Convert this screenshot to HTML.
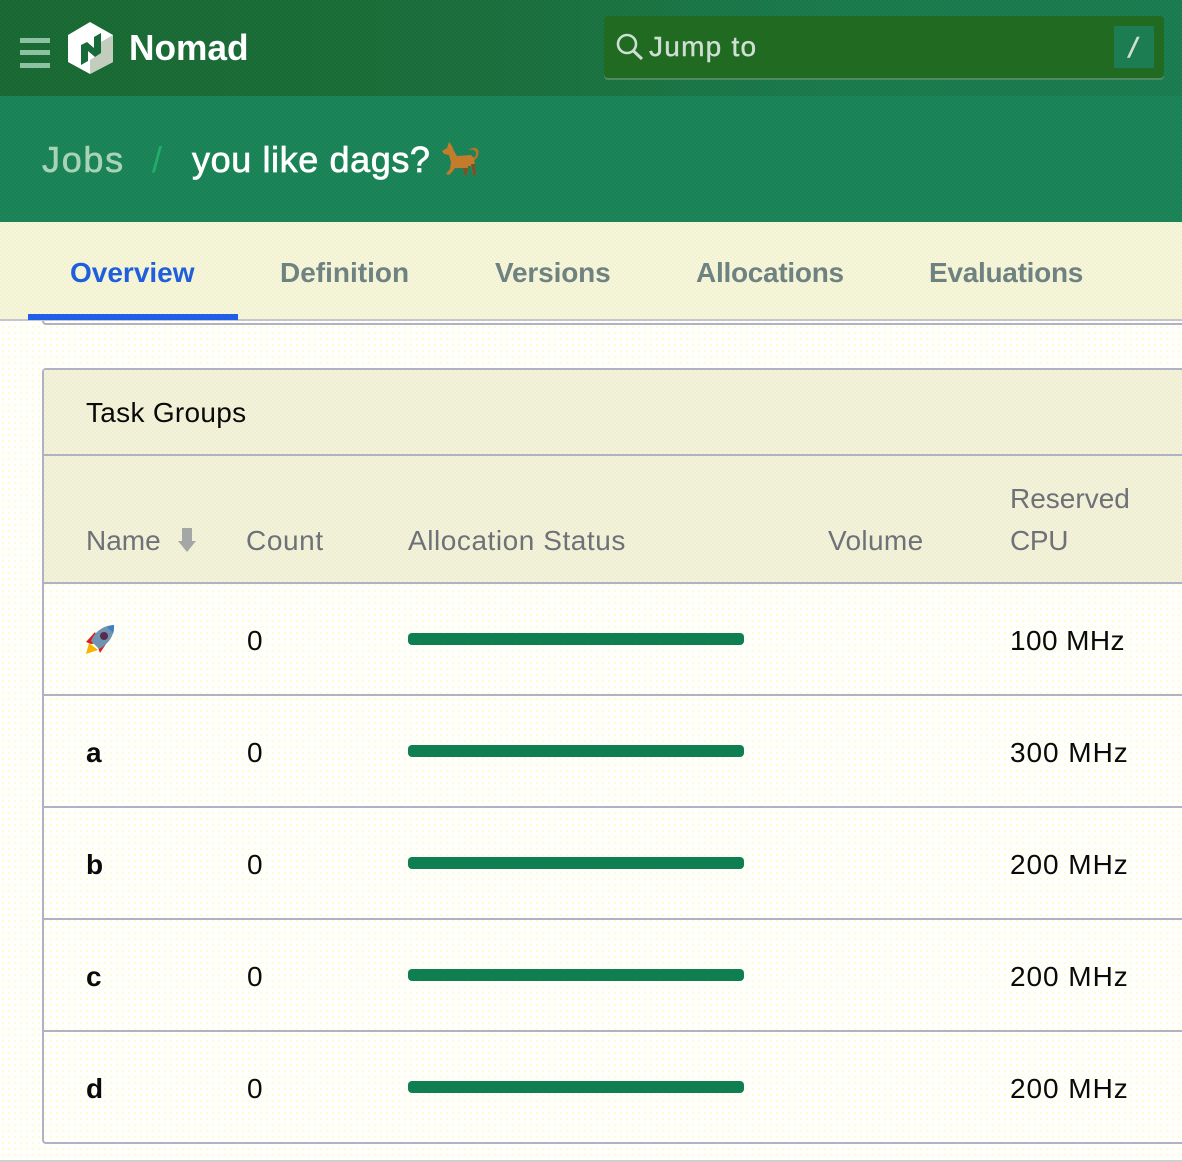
<!DOCTYPE html>
<html><head><meta charset="utf-8"><style>
html,body{margin:0;padding:0;background:#fefefb}
#p{position:relative;width:1182px;height:1162px;overflow:hidden;font-family:"Liberation Sans",sans-serif;background-color:#fefefa;background-image:radial-gradient(circle,#fff7b0 0.6px,transparent 0.9px);background-size:6px 6px}
.a{position:absolute;white-space:nowrap}
.l{position:absolute;height:2px;background:#b0b1c4;left:44px;right:0}
.hd{position:absolute;font-size:28px;line-height:34px;color:#6f7178;letter-spacing:.5px}
.c{position:absolute;font-size:28px;line-height:34px;color:#0a0a0a;letter-spacing:.4px}
.m{letter-spacing:.95px}
.b{position:absolute;font-size:28px;line-height:34px;color:#0a0a0a;font-weight:bold;left:86px}
.bar{position:absolute;left:408px;width:336px;height:12px;border-radius:4px;background:#0f7f52}
.tab{position:absolute;top:256px;font-size:28px;line-height:34px;font-weight:bold;color:#6f8282}
.dith{background-image:repeating-conic-gradient(rgba(255,255,255,.28) 0 25%,transparent 0 50%);background-size:4px 4px}
.dk{background-image:repeating-conic-gradient(rgba(0,40,30,.07) 0 25%,transparent 0 50%);background-size:4px 4px}
</style></head><body><div id="p">
<div class="a" style="left:0;top:0;width:1182px;height:96px;background:linear-gradient(90deg,#1b6c34 0,#1c713c 40%,#1c7d4e 70%,#1c7f52 100%)"></div>
<div class="a dk" style="left:0;top:0;width:1182px;height:96px"></div>
<div class="a" style="left:0;top:96px;width:1182px;height:126px;background:#1c8659"></div>
<div class="a dk" style="left:0;top:96px;width:1182px;height:126px"></div>
<div class="a" style="left:20px;top:38px;width:30px;height:5px;background:#8cc2a2"></div>
<div class="a" style="left:20px;top:50px;width:30px;height:5px;background:#8cc2a2"></div>
<div class="a" style="left:20px;top:63px;width:30px;height:5px;background:#8cc2a2"></div>
<svg class="a" style="left:60px;top:15px" width="60" height="65" viewBox="60 15 60 65">
<path d="M90 22L113 35V62L90 74L68 62V35Z" fill="#fff"/>
<path d="M113 35L101 42V53L90 60V74L113 62Z" fill="#c3cdbd"/>
<path d="M81 45L87 42L94 48V37L101 33V53L95 57L88 51V61L81 65Z" fill="#176a3a"/>
</svg>
<div class="a" style="left:129px;top:27px;font-size:36px;line-height:42px;font-weight:bold;color:#fff;transform-origin:0 50%;transform:scaleX(.98)">Nomad</div>
<div class="a" style="left:604px;top:16px;width:560px;height:62px;background:#206a22;border-radius:4px;box-shadow:0 2px 0 #4f8a63"></div>
<div class="a" style="left:1114px;top:26px;width:40px;height:42px;background:#1c7d52"></div>
<svg class="a" style="left:612px;top:30px" width="34" height="34" viewBox="0 0 34 34"><circle cx="15" cy="14" r="9" fill="none" stroke="#cfe0d2" stroke-width="2.6"/><path d="M21.500 21L30 29" stroke="#cfe0d2" stroke-width="3"/></svg>
<div class="a" style="left:649px;top:30px;font-size:28px;line-height:34px;color:#cfe0d2;letter-spacing:1.25px;-webkit-text-stroke:.4px #cfe0d2">Jump to</div>
<div class="a" style="left:1129px;top:31px;font-size:28px;line-height:34px;font-style:italic;color:#cfe0d2;-webkit-text-stroke:.6px #cfe0d2">/</div>
<div class="a" style="left:42px;top:139px;font-size:36px;line-height:42px;color:#a8d3b6;letter-spacing:1.700px;-webkit-text-stroke:.6px #a8d3b6">Jobs</div>
<div class="a" style="left:152px;top:139px;font-size:36px;line-height:42px;color:#22ad68">/</div>
<div class="a" style="left:192px;top:139px;font-size:36px;line-height:42px;color:#fff;letter-spacing:.6px;-webkit-text-stroke:.7px #fff">you like dags?</div>
<svg class="a" style="left:440px;top:142px" width="40" height="36" viewBox="0 0 40 36">
<path d="M33 16C37 14 37 9 33 8C31 7 29 8 28 9C32 4 39 5 38.500 11C38 16 35 19 31 19Z" fill="#b8722a"/>
<path d="M2 9L7 6L9 0L12 4L14 9L17 14L31 13L34 16L36 33H33L31 24L28 24L27 33H24L23 26L15 26L12 30L9 33L6 32L10 27L11 20L9 13L4 12Z" fill="#c47c2c"/>
<path d="M23 26H28L27 33H24ZM31 22L33 33H36L35 22Z" fill="#7a5228"/>
</svg>
<div class="a dith" style="left:0;top:222px;width:1182px;height:97px;background-color:#f3f2d0"></div>
<div class="a" style="left:0;top:319px;width:1182px;height:2px;background:#c4c5cf"></div>
<div class="a" style="left:42px;top:321px;width:1160px;height:2px;border:2px solid #b0b1c4;border-top:0;border-radius:0 0 4px 4px"></div>
<div class="tab" style="left:70px;color:#1f5fdc">Overview</div>
<div class="tab" style="left:280px">Definition</div>
<div class="tab" style="left:495px;letter-spacing:-.15px">Versions</div>
<div class="tab" style="left:696px;letter-spacing:-.28px">Allocations</div>
<div class="tab" style="left:929px;letter-spacing:-.28px">Evaluations</div>
<div class="a" style="left:28px;top:314px;width:210px;height:6px;background:#1f5fe8"></div>
<div class="a" style="left:42px;top:368px;width:1160px;height:776px;border:2px solid #b0b1c4;border-radius:4px;box-sizing:border-box"></div>
<div class="a dith" style="left:44px;top:370px;width:1138px;height:213px;background-color:#efeed0"></div>
<div class="l" style="top:454px"></div>
<div class="l" style="top:582px"></div>
<div class="l" style="top:694px"></div>
<div class="l" style="top:806px"></div>
<div class="l" style="top:918px"></div>
<div class="l" style="top:1030px"></div>
<div class="a" style="left:0;top:1160px;width:1182px;height:2px;background:#cfcfd0"></div>
<div class="c" style="left:86px;top:396px;letter-spacing:.3px">Task Groups</div>
<div class="hd" style="left:86px;top:524px;letter-spacing:0">Name</div>
<svg class="a" style="left:176px;top:527px" width="22" height="26" viewBox="0 0 22 26"><path d="M6 1H16V14H20L11 25L2 14H6Z" fill="#a5a6a6"/></svg>
<div class="hd" style="left:246px;top:524px;letter-spacing:.6px">Count</div>
<div class="hd" style="left:408px;top:524px;letter-spacing:.55px">Allocation Status</div>
<div class="hd" style="left:828px;top:524px;letter-spacing:.35px">Volume</div>
<div class="hd" style="left:1010px;top:482px;letter-spacing:0">Reserved</div>
<div class="hd" style="left:1010px;top:524px;letter-spacing:-.3px">CPU</div>
<svg class="a" style="left:84px;top:624px" width="32" height="32" viewBox="0 0 32 32">
<path d="M2 18L11 8L15 19L7 20Z" fill="#d8201f"/><path d="M16 29L24 17L12 18Z" fill="#d8201f"/>
<path d="M2 30L5 19L14 26Z" fill="#f7b500"/>
<path d="M7 17C11 6 22 1 30 1C31 10 25 20 15 25Z" fill="#6f93b2"/>
<path d="M23 3L30 1L29.500 9Z" fill="#3a7fc4"/><circle cx="20" cy="12" r="4" fill="#5a2a4a"/></svg>
<div class="c" style="left:247px;top:624px">0</div>
<div class="bar" style="top:633px"></div>
<div class="c" style="left:1010px;top:624px">100 MHz</div>
<div class="b" style="top:736px">a</div><div class="c" style="left:247px;top:736px">0</div><div class="bar" style="top:745px"></div><div class="c m" style="left:1010px;top:736px">300 MHz</div>
<div class="b" style="top:848px">b</div><div class="c" style="left:247px;top:848px">0</div><div class="bar" style="top:857px"></div><div class="c m" style="left:1010px;top:848px">200 MHz</div>
<div class="b" style="top:960px">c</div><div class="c" style="left:247px;top:960px">0</div><div class="bar" style="top:969px"></div><div class="c m" style="left:1010px;top:960px">200 MHz</div>
<div class="b" style="top:1072px">d</div><div class="c" style="left:247px;top:1072px">0</div><div class="bar" style="top:1081px"></div><div class="c m" style="left:1010px;top:1072px">200 MHz</div>
</div></body></html>
